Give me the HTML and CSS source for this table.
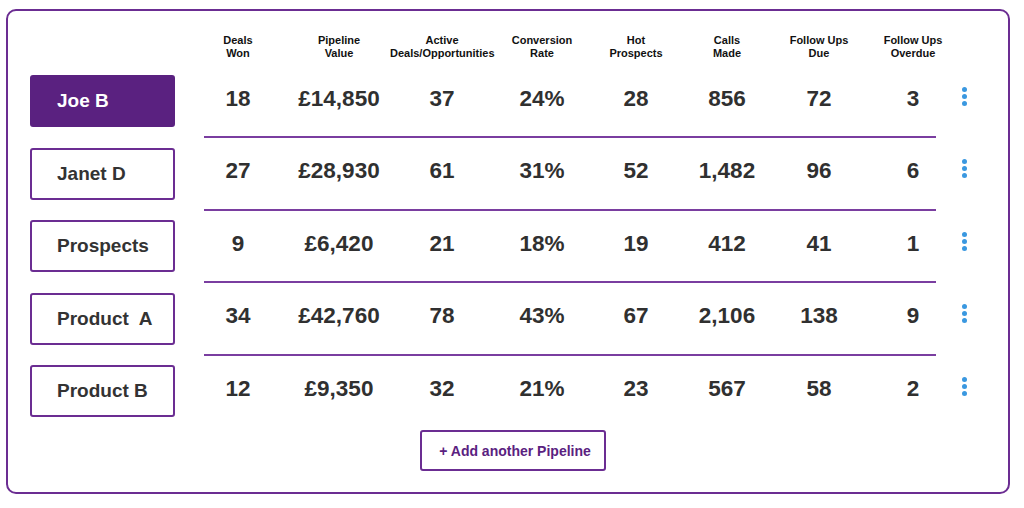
FILE: index.html
```html
<!DOCTYPE html>
<html lang="en">
<head>
<meta charset="utf-8">
<title>Pipelines</title>
<link rel="stylesheet" href="styles.css">
</head>
<body>
<div class="card">
  <div class="row head">
    <div></div>
    <div class="th">Deals<br>Won</div>
    <div class="th">Pipeline<br>Value</div>
    <div class="th">Active<br>Deals/Opportunities</div>
    <div class="th">Conversion<br>Rate</div>
    <div class="th">Hot<br>Prospects</div>
    <div class="th">Calls<br>Made</div>
    <div class="th">Follow Ups<br>Due</div>
    <div class="th">Follow Ups<br>Overdue</div>
    <div></div>
  </div>

  <div class="row">
    <div class="name-cell"><span class="name active">Joe B</span></div>
    <div class="val">18</div><div class="val">£14,850</div><div class="val">37</div><div class="val">24%</div>
    <div class="val">28</div><div class="val">856</div><div class="val">72</div><div class="val">3</div>
    <div class="more"><i></i><i></i><i></i></div>
  </div>
  <div class="sep"></div>

  <div class="row">
    <div class="name-cell"><span class="name">Janet D</span></div>
    <div class="val">27</div><div class="val">£28,930</div><div class="val">61</div><div class="val">31%</div>
    <div class="val">52</div><div class="val">1,482</div><div class="val">96</div><div class="val">6</div>
    <div class="more"><i></i><i></i><i></i></div>
  </div>
  <div class="sep"></div>

  <div class="row">
    <div class="name-cell"><span class="name">Prospects</span></div>
    <div class="val">9</div><div class="val">£6,420</div><div class="val">21</div><div class="val">18%</div>
    <div class="val">19</div><div class="val">412</div><div class="val">41</div><div class="val">1</div>
    <div class="more"><i></i><i></i><i></i></div>
  </div>
  <div class="sep"></div>

  <div class="row">
    <div class="name-cell"><span class="name">Product&nbsp; A</span></div>
    <div class="val">34</div><div class="val">£42,760</div><div class="val">78</div><div class="val">43%</div>
    <div class="val">67</div><div class="val">2,106</div><div class="val">138</div><div class="val">9</div>
    <div class="more"><i></i><i></i><i></i></div>
  </div>
  <div class="sep"></div>

  <div class="row">
    <div class="name-cell"><span class="name">Product B</span></div>
    <div class="val">12</div><div class="val">£9,350</div><div class="val">32</div><div class="val">21%</div>
    <div class="val">23</div><div class="val">567</div><div class="val">58</div><div class="val">2</div>
    <div class="more"><i></i><i></i><i></i></div>
  </div>

  <div class="actions">
    <button class="add">+ Add another Pipeline</button>
  </div>
</div>
</body>
</html>
```

FILE: styles.css
```css
* { box-sizing: border-box; }

html, body {
  margin: 0;
  padding: 0;
  background: #ffffff;
}

body {
  font-family: "Liberation Sans", Arial, sans-serif;
  color: #2f2f2f;
  padding: 9px 14px 14px 6px;
}

.card {
  width: 1004px;
  height: 485px;
  border: 2px solid #6b2d92;
  border-radius: 10px;
  padding: 22px 0 0 22px;
}

.row {
  display: grid;
  grid-template-columns: 158px 100px 102px 104px 96px 92px 90px 94px 94px 8px;
  align-items: center;
}

.head {
  height: 28px;
  margin-bottom: 14px;
}

.th {
  font-size: 11px;
  line-height: 13px;
  font-weight: 700;
  color: #111111;
  text-align: center;
  white-space: nowrap;
}

.name-cell {
  height: 52px;
}

.name {
  display: flex;
  align-items: center;
  width: 145px;
  height: 52px;
  padding-left: 25px;
  border: 2px solid #6b2d92;
  border-radius: 3px;
  font-size: 19px;
  font-weight: 700;
  color: #333333;
  background: #ffffff;
  white-space: nowrap;
}

.name.active {
  background: #5a2180;
  border-color: #5a2180;
  color: #ffffff;
}

.val {
  text-align: center;
  font-size: 22.5px;
  font-weight: 700;
  color: #303030;
  padding-bottom: 5px;
  white-space: nowrap;
}

.more {
  display: flex;
  flex-direction: column;
  align-items: center;
  gap: 2px;
  padding-bottom: 10px;
}

.more i {
  display: block;
  width: 5px;
  height: 5px;
  border-radius: 50%;
  background: #3a98e0;
}

.sep {
  height: 2px;
  width: 732px;
  margin: 9.25px 0 9.25px 174px;
  background: #7a3ea0;
}

.actions {
  display: flex;
  padding-left: 390px;
  padding-top: 13px;
}

.add {
  width: 186px;
  height: 41px;
  border: 2px solid #6b2d92;
  border-radius: 3px;
  background: #ffffff;
  color: #5a2180;
  font-family: "Liberation Sans", Arial, sans-serif;
  font-size: 14px;
  font-weight: 700;
  padding: 0 0 0 4px;
  cursor: pointer;
}
```
